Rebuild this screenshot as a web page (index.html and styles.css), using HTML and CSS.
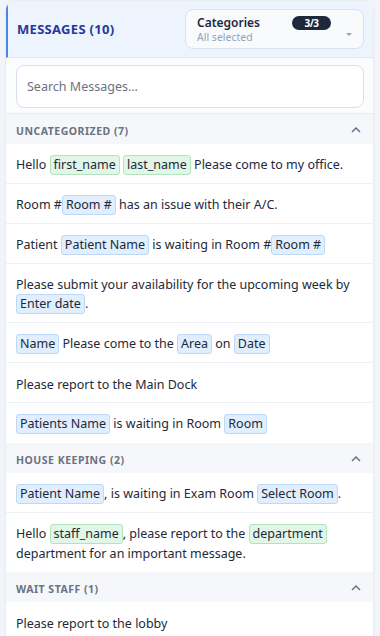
FILE: index.html
```html
<!DOCTYPE html>
<html>
<head>
<meta charset="utf-8">
<link rel="stylesheet" href="styles.css">
</head>
<body>
<div class="card">
  <div class="header">
    <div class="title">MESSAGES (10)</div>
    <div class="cats">
      <div class="cats-text">
        <div class="cats-label">Categories</div>
        <div class="cats-sub">All selected</div>
      </div>
      <span class="badge">3/3</span>
      <svg class="caret" width="8" height="5" viewBox="0 0 8 5"><path d="M1 1 L4 4 L7 1 Z" fill="#94a3b8"/></svg>
    </div>
  </div>
  <div class="search-wrap">
    <div class="search">Search Messages...</div>
  </div>

  <div class="section">
    <div class="sec-head"><span>UNCATEGORIZED (7)</span><svg class="chev" width="10" height="6" viewBox="0 0 10 6"><path d="M1 5 L5 1 L9 5" fill="none" stroke="#64748b" stroke-width="1.5"/></svg></div>
    <div class="row"><div>Hello <span class="chip g">first_name</span> <span class="chip g">last_name</span> Please come to my office.</div></div>
    <div class="row"><div>Room #<span class="chip b">Room #</span> has an issue with their A/C.</div></div>
    <div class="row"><div>Patient <span class="chip b">Patient Name</span> is waiting in Room #<span class="chip b">Room #</span></div></div>
    <div class="row"><div>Please submit your availability for the upcoming week by <span class="chip b">Enter date</span>.</div></div>
    <div class="row"><div><span class="chip b">Name</span> Please come to the <span class="chip b">Area</span> on <span class="chip b">Date</span></div></div>
    <div class="row"><div>Please report to the Main Dock</div></div>
    <div class="row"><div><span class="chip b">Patients Name</span> is waiting in Room <span class="chip b">Room</span></div></div>
  </div>

  <div class="section">
    <div class="sec-head"><span>HOUSE KEEPING (2)</span><svg class="chev" width="10" height="6" viewBox="0 0 10 6"><path d="M1 5 L5 1 L9 5" fill="none" stroke="#64748b" stroke-width="1.5"/></svg></div>
    <div class="row"><div><span class="chip b">Patient Name</span>, is waiting in Exam Room <span class="chip b">Select Room</span>.</div></div>
    <div class="row"><div>Hello <span class="chip g">staff_name</span>, please report to the <span class="chip g">department</span> department for an important message.</div></div>
  </div>

  <div class="section">
    <div class="sec-head"><span>WAIT STAFF (1)</span><svg class="chev" width="10" height="6" viewBox="0 0 10 6"><path d="M1 5 L5 1 L9 5" fill="none" stroke="#64748b" stroke-width="1.5"/></svg></div>
    <div class="row"><div>Please report to the lobby</div></div>
  </div>
</div>
</body>
</html>
```

FILE: styles.css
```css
* { box-sizing: border-box; }
html, body { margin: 0; padding: 0; }
body {
  background: #f1f5f9;
  font-family: "Noto Sans", "Open Sans", sans-serif;
  color: #1f2937;
  width: 380px;
  height: 636px;
  overflow: hidden;
}
.card {
  margin: 1px 7px 0 6px;
  background: #ffffff;
  border-radius: 9px 9px 0 0;
  box-shadow: 0 0 3px rgba(15, 23, 42, 0.08);
  overflow: hidden;
}
.header {
  height: 57px;
  background: #edf4fe;
  border-left: 2px solid #4a86e8;
  border-bottom: 1px solid #e2e8f0;
  display: flex;
  align-items: center;
  justify-content: space-between;
  padding: 0 9px 0 9px;
}
.title {
  font-weight: 700;
  font-size: 13px;
  color: #26399a;
  letter-spacing: 0.3px;
}
.cats {
  width: 179px;
  height: 40px;
  background: #f8fafc;
  border: 1px solid #dbe2eb;
  border-radius: 8px;
  display: flex;
  align-items: flex-start;
  padding: 5px 10px 0 11px;
}
.cats-text { flex: 1; }
.cats-label {
  font-size: 12px;
  font-weight: 600;
  color: #1e293b;
  line-height: 15px;
}
.cats-sub {
  font-size: 10.5px;
  color: #94a3b8;
  line-height: 14px;
}
.badge {
  background: #1e293b;
  color: #ffffff;
  font-size: 10px;
  font-weight: 700;
  border-radius: 8px;
  width: 39px;
  height: 14px;
  line-height: 14px;
  text-align: center;
  margin-top: 1px;
  letter-spacing: -0.5px;
}
.caret { margin: 17px 0 0 14px; }
.search-wrap {
  background: #fbfcfe;
  padding: 7px 9px 5px 10px;
  border-bottom: 1px solid #e8edf3;
}
.search {
  height: 43px;
  border: 1px solid #d7dfe9;
  border-radius: 8px;
  background: #ffffff;
  font-size: 12.5px;
  color: #6b7280;
  padding: 0 10px;
  display: flex;
  align-items: center;
}
.section { border-top: 4px solid #f4f6f9; }
.sec-head {
  height: 26px;
  background: #f5f7fb;
  display: flex;
  align-items: center;
  justify-content: space-between;
  padding: 0 12px 0 10px;
  font-size: 10.5px;
  font-weight: 700;
  color: #6b7280;
  letter-spacing: 0.5px;
}
.chev { margin-top: -2px; }
.row {
  min-height: 40px;
  padding: 11px 10px 8px;
  display: flex;
  flex-direction: column;
  justify-content: center;
  font-size: 12.5px;
  line-height: 19px;
  color: #1f2937;
  border-bottom: 1px solid #eef1f5;
}
.section .row:last-child { border-bottom: none; padding-bottom: 9px; }
.chip {
  display: inline-block;
  padding: 0 3px;
  height: 20px;
  line-height: 18px;
  vertical-align: baseline;
  border-radius: 3px;
  border: 1px solid;
}
.chip.b { background: #e0eefd; border-color: #bcd9f7; }
.chip.g { background: #e2f6e8; border-color: #b4e3c1; }
```
